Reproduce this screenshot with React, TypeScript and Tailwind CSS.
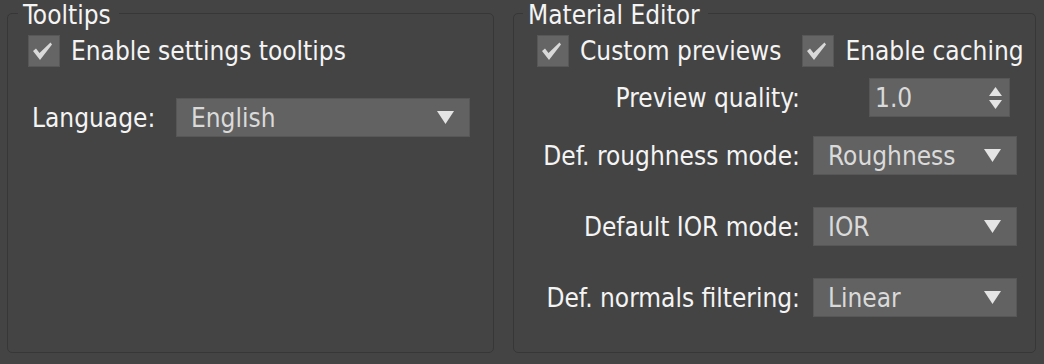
import React from 'react';

const FONT = "font-['DejaVu_Sans_Condensed','DejaVu_Sans',sans-serif]";

function Check() {
  return (
    <div className="w-[32px] h-[32px] shrink-0 bg-[#656565] border border-[#575757] flex items-center justify-center">
      <svg width="30" height="30" viewBox="0 0 30 30">
        <polygon points="4,15 7,12.5 10.5,17 21.5,6.5 23,8.5 11,24" fill="#d9d9d9" />
      </svg>
    </div>
  );
}

function Arrow() {
  return (
    <svg width="17" height="13" viewBox="0 0 17 13" className="shrink-0">
      <polygon points="0,0 17,0 8.5,13" fill="#e4e4e4" />
    </svg>
  );
}

function Dropdown({ value, width }: { value: string; width: string }) {
  return (
    <div className={`${width} h-[39px] bg-[#626262] border border-[#575757] flex items-center justify-between pl-[14px] pr-[15px] text-[#dadada]`}>
      <span>{value}</span>
      <Arrow />
    </div>
  );
}

function CheckRow({ label }: { label: string }) {
  return (
    <div className="flex items-center gap-[11px]">
      <Check />
      <span>{label}</span>
    </div>
  );
}

export default function App() {
  return (
    <div className={`w-[1044px] h-[364px] bg-[#444444] flex gap-[19px] pl-[7px] text-[26px] leading-[30px] text-[#f4f4f4] ${FONT}`}>
      {/* Tooltips group */}
      <fieldset className="w-[487px] h-[353px] m-0 p-0 min-w-0 border border-[#373737] rounded-[5px]">
        <legend className="ml-[10px] px-[5px] pr-[8px] pt-[4px] leading-[22px]">Tooltips</legend>
        <div className="pt-[9px] pl-[20px] flex flex-col">
          <CheckRow label="Enable settings tooltips" />
          <div className="mt-[31px] flex items-center">
            <span className="w-[148px] pl-[4px]">Language:</span>
            <Dropdown value="English" width="w-[294px]" />
          </div>
        </div>
      </fieldset>

      {/* Material Editor group */}
      <fieldset className="w-[523px] h-[353px] m-0 p-0 min-w-0 border border-[#373737] rounded-[5px]">
        <legend className="ml-[9px] px-[5px] pr-[8px] pt-[4px] leading-[22px]">Material Editor</legend>
        <div className="pt-[9px] pl-[23px] flex flex-col">
          <div className="flex items-center gap-[21px]">
            <CheckRow label="Custom previews" />
            <CheckRow label="Enable caching" />
          </div>

          <div className="mt-[11px] flex items-center">
            <span className="w-[263px] text-right">Preview quality:</span>
            <div className="ml-[69px] w-[141px] h-[39px] bg-[#626262] border border-[#575757] flex items-center justify-between pl-[5px] pr-[7px] text-[#dadada]">
              <span>1.0</span>
              <div className="flex flex-col gap-[4px]">
                <svg width="13" height="9" viewBox="0 0 13 9">
                  <polygon points="6.5,0 13,9 0,9" fill="#e4e4e4" />
                </svg>
                <svg width="13" height="9" viewBox="0 0 13 9">
                  <polygon points="0,0 13,0 6.5,9" fill="#e4e4e4" />
                </svg>
              </div>
            </div>
          </div>

          <div className="mt-[19px] flex flex-col gap-[32px]">
            <div className="flex items-center">
              <span className="w-[263px] text-right">Def. roughness mode:</span>
              <div className="ml-[13px]"><Dropdown value="Roughness" width="w-[204px]" /></div>
            </div>
            <div className="flex items-center">
              <span className="w-[263px] text-right">Default IOR mode:</span>
              <div className="ml-[13px]"><Dropdown value="IOR" width="w-[204px]" /></div>
            </div>
            <div className="flex items-center">
              <span className="w-[263px] text-right">Def. normals filtering:</span>
              <div className="ml-[13px]"><Dropdown value="Linear" width="w-[204px]" /></div>
            </div>
          </div>
        </div>
      </fieldset>
    </div>
  );
}
